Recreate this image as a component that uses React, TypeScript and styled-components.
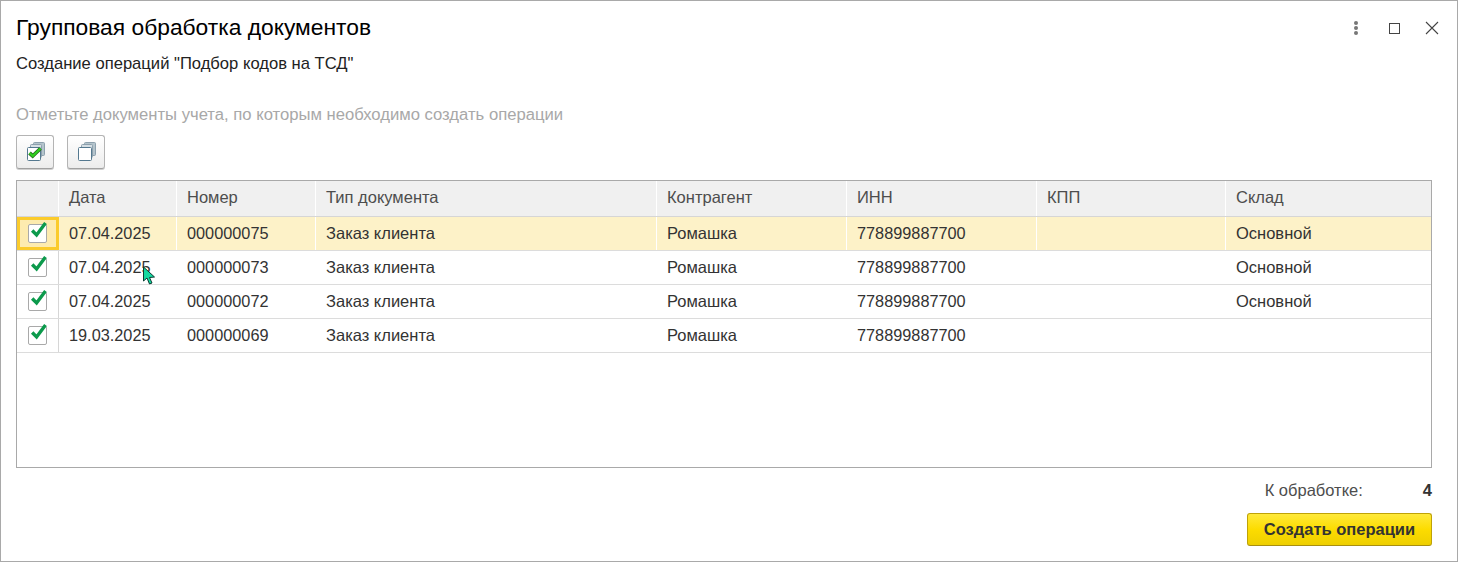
import React from "react";
import styled, { createGlobalStyle } from "styled-components";

const Global = createGlobalStyle`
  html, body { margin: 0; padding: 0; background: #fff; }
  body { font-family: "Liberation Sans", Arial, sans-serif; color: #333; }
`;

const Win = styled.div`
  box-sizing: border-box;
  width: 1458px;
  height: 562px;
  border: 1px solid #a9a9a9;
  background: #fff;
  padding: 0 25px 0 15px;
  display: flex;
  flex-direction: column;
  overflow: hidden;
`;
const TitleBar = styled.div`
  display: flex;
  align-items: center;
  justify-content: space-between;
  height: 54px;
  margin-right: -8px;
  flex: none;
`;
const Title = styled.h1`
  margin: 0;
  padding-bottom: 2px;
  font-weight: 400;
  font-size: 22.8px;
  color: #000;
`;
const WinIcons = styled.div`
  display: flex;
  align-items: center;
  gap: 22px;
`;
const Sub = styled.div`
  font-size: 16.6px;
  color: #222;
  height: 18px;
  line-height: 18px;
  flex: none;
`;
const Hint = styled.div`
  margin-top: 33px;
  font-size: 16.65px;
  color: #a8a8a8;
  height: 18px;
  line-height: 18px;
  flex: none;
`;
const Tools = styled.div`
  display: flex;
  gap: 13px;
  margin-top: 11px;
  flex: none;
`;
const ToolBtn = styled.button`
  box-sizing: border-box;
  width: 38px;
  height: 34px;
  padding: 0;
  border: 1px solid #b4b4b4;
  border-bottom-color: #a0a0a0;
  border-radius: 3px;
  background: linear-gradient(#fff, #ececec);
  box-shadow: 0 1px 0 #cfcfcf;
  display: flex;
  align-items: center;
  justify-content: center;
`;
const Table = styled.div`
  box-sizing: border-box;
  margin-top: 11px;
  width: 1416px;
  height: 288px;
  border: 1px solid #a9a9a9;
  flex: none;
  margin-right: -1px;
`;
const cols = "42px 118px 139px 341px 190px 190px 189px 1fr";
const Head = styled.div`
  display: grid;
  grid-template-columns: ${cols};
  height: 36px;
  background: #f0f0f0;
  border-bottom: 1px solid #d6d6d6;
  box-sizing: border-box;
`;
const HCell = styled.div`
  box-sizing: border-box;
  border-right: 1px solid #fff;
  padding-left: 10px;
  font-size: 16.5px;
  color: #4d4d4d;
  line-height: 33px;
  white-space: nowrap;
  &:last-child { border-right: 0; }
`;
const Row = styled.div<{ $active?: boolean }>`
  display: grid;
  grid-template-columns: ${cols};
  height: 34px;
  box-sizing: border-box;
  border-bottom: 1px solid #dcdcdc;
  background: ${(p) => (p.$active ? "#fdf2c8" : "#fff")};
`;
const Cell = styled.div<{ $active?: boolean; $digits?: boolean }>`
  box-sizing: border-box;
  border-right: 1px solid ${(p) => (p.$active ? "#fff" : "transparent")};
  padding-left: 10px;
  font-size: ${(p) => (p.$digits ? "16.3px" : "16.5px")};
  color: #333;
  line-height: 33px;
  white-space: nowrap;
  &:last-child { border-right: 0; }
`;
const CheckCell = styled.div<{ $active?: boolean }>`
  box-sizing: border-box;
  display: flex;
  align-items: center;
  justify-content: center;
  border-right: 1px solid #d6d6d6;
  padding-right: 1px;
  ${(p) =>
    p.$active
      ? `outline: 3px solid #fbcb2b; outline-offset: -3px; background:#fdebaf; height: 33px; border-right-color: transparent;`
      : ""}
`;
const Box = styled.span`
  position: relative;
  box-sizing: border-box;
  width: 19px;
  height: 19px;
  border: 1px solid #a9a9a9;
  border-radius: 2px;
  background: #fff;
  display: block;
`;
const Tick = styled.svg`
  position: absolute;
  left: 1px;
  top: -4px;
`;
const Cursor = styled.svg`
  position: absolute;
  left: 142px;
  top: 266px;
`;
const Summary = styled.div`
  display: flex;
  justify-content: flex-end;
  margin-top: 13px;
  font-size: 16.5px;
  line-height: 18px;
  height: 18px;
  flex: none;
`;
const SumLabel = styled.span`
  color: #4d4d4d;
`;
const SumValue = styled.b`
  margin-left: 60px;
  color: #333;
`;
const Footer = styled.div`
  display: flex;
  justify-content: flex-end;
  margin-top: 14px;
  flex: none;
`;
const Primary = styled.button`
  box-sizing: border-box;
  width: 185px;
  height: 33px;
  border: 1px solid #bfa207;
  border-bottom-color: #a88f10;
  border-radius: 3px;
  background: linear-gradient(#ffe93a, #fcdc00 50%, #eecf00);
  color: #333;
  font-family: inherit;
  font-weight: 700;
  font-size: 16.5px;
  padding: 0;
`;

const Check = () => (
  <Box>
    <Tick width="18" height="18" viewBox="0 0 18 18">
      <path d="M2.2 9.5 L6.6 14 L15.5 2" fill="none" stroke="#0c9a4c" strokeWidth="3.4" />
    </Tick>
  </Box>
);

const data = [
  ["07.04.2025", "000000075", "Заказ клиента", "Ромашка", "778899887700", "", "Основной"],
  ["07.04.2025", "000000073", "Заказ клиента", "Ромашка", "778899887700", "", "Основной"],
  ["07.04.2025", "000000072", "Заказ клиента", "Ромашка", "778899887700", "", "Основной"],
  ["19.03.2025", "000000069", "Заказ клиента", "Ромашка", "778899887700", "", ""],
];
const heads = ["Дата", "Номер", "Тип документа", "Контрагент", "ИНН", "КПП", "Склад"];
const digitCols = [0, 1, 4];

const Sheets = ({ checked }: { checked?: boolean }) => (
  <svg width="22" height="22" viewBox="0 0 22 22">
    <rect x="9.5" y="1.5" width="11" height="13" rx="1" fill="#b4c4cc" stroke="#8da0ad" />
    <rect x="6.5" y="3.5" width="11" height="13" rx="1" fill="#d5dee3" stroke="#8da0ad" />
    <rect x="3.5" y="6.5" width="13" height="13" rx="1" fill="#fff" stroke="#54788f" />
    {checked && (
      <>
        <path d="M5.5 12 L8.7 15 L16.5 7.5" fill="none" stroke="#2a6b1e" strokeWidth="3.8" />
        <path d="M5.5 12 L8.7 15 L16.5 7.5" fill="none" stroke="#2fd01f" strokeWidth="2.2" />
      </>
    )}
  </svg>
);

export default function App() {
  return (
    <Win>
      <Global />
      <TitleBar>
        <Title>Групповая обработка документов</Title>
        <WinIcons>
          <svg width="16" height="16" viewBox="0 0 16 16">
            <g fill="#777">
              <circle cx="8" cy="3" r="2" />
              <circle cx="8" cy="8" r="2" />
              <circle cx="8" cy="13" r="2" />
            </g>
          </svg>
          <svg width="16" height="16" viewBox="0 0 16 16">
            <rect x="3.5" y="3.5" width="10" height="10" fill="none" stroke="#444" />
          </svg>
          <svg width="16" height="16" viewBox="0 0 16 16">
            <path d="M2 2 L14 14 M14 2 L2 14" stroke="#444" strokeWidth="1.1" fill="none" />
          </svg>
        </WinIcons>
      </TitleBar>
      <Sub>Создание операций "Подбор кодов на ТСД"</Sub>
      <Hint>Отметьте документы учета, по которым необходимо создать операции</Hint>
      <Tools>
        <ToolBtn><Sheets checked /></ToolBtn>
        <ToolBtn><Sheets /></ToolBtn>
      </Tools>
      <Table>
        <Head>
          <HCell />
          {heads.map((h) => <HCell key={h}>{h}</HCell>)}
        </Head>
        {data.map((r, i) => (
          <Row key={r[1]} $active={i === 0}>
            <CheckCell $active={i === 0}><Check /></CheckCell>
            {r.map((c, j) => (
              <Cell key={j} $active={i === 0} $digits={digitCols.includes(j)}>{c}</Cell>
            ))}
          </Row>
        ))}
      </Table>
      <Summary>
        <SumLabel>К обработке:</SumLabel>
        <SumValue>4</SumValue>
      </Summary>
      <Footer>
        <Primary>Создать операции</Primary>
      </Footer>
      <Cursor width="14" height="20" viewBox="0 0 14 20">
        <path d="M1.5 1 L1.5 15 L5 12 L7.5 18 L10 17 L7.5 11.5 L12.5 11 Z" fill="#12d9a0" stroke="#0a3a30" strokeWidth="1" />
      </Cursor>
    </Win>
  );
}
